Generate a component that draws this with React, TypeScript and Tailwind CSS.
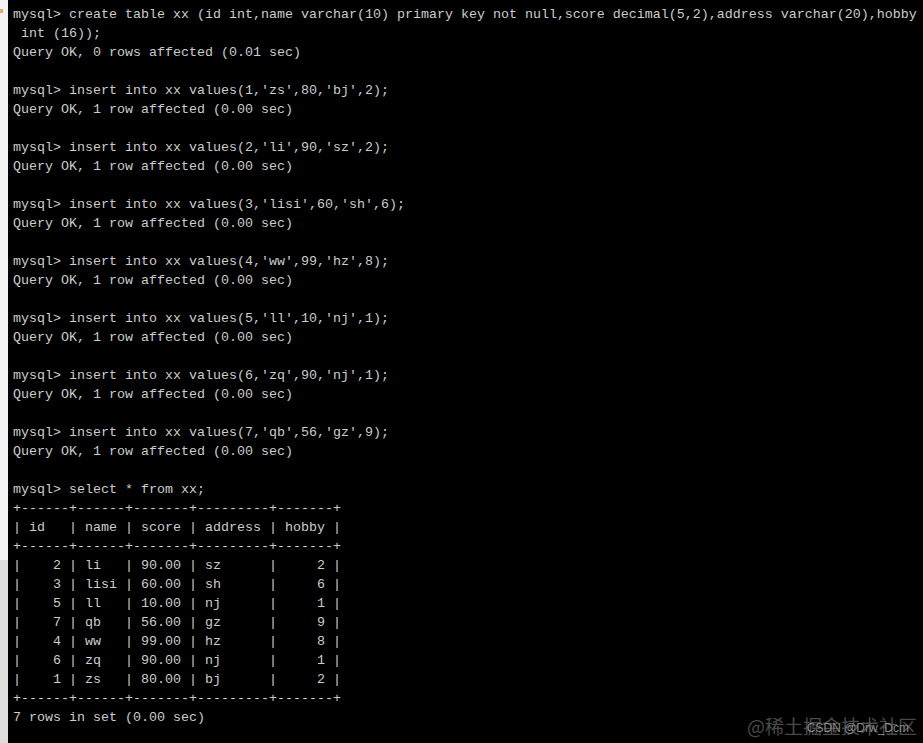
const lines: string[] = [
  "mysql> create table xx (id int,name varchar(10) primary key not null,score decimal(5,2),address varchar(20),hobby",
  " int (16));",
  "Query OK, 0 rows affected (0.01 sec)",
  "",
  "mysql> insert into xx values(1,'zs',80,'bj',2);",
  "Query OK, 1 row affected (0.00 sec)",
  "",
  "mysql> insert into xx values(2,'li',90,'sz',2);",
  "Query OK, 1 row affected (0.00 sec)",
  "",
  "mysql> insert into xx values(3,'lisi',60,'sh',6);",
  "Query OK, 1 row affected (0.00 sec)",
  "",
  "mysql> insert into xx values(4,'ww',99,'hz',8);",
  "Query OK, 1 row affected (0.00 sec)",
  "",
  "mysql> insert into xx values(5,'ll',10,'nj',1);",
  "Query OK, 1 row affected (0.00 sec)",
  "",
  "mysql> insert into xx values(6,'zq',90,'nj',1);",
  "Query OK, 1 row affected (0.00 sec)",
  "",
  "mysql> insert into xx values(7,'qb',56,'gz',9);",
  "Query OK, 1 row affected (0.00 sec)",
  "",
  "mysql> select * from xx;",
  "+------+------+-------+---------+-------+",
  "| id   | name | score | address | hobby |",
  "+------+------+-------+---------+-------+",
  "|    2 | li   | 90.00 | sz      |     2 |",
  "|    3 | lisi | 60.00 | sh      |     6 |",
  "|    5 | ll   | 10.00 | nj      |     1 |",
  "|    7 | qb   | 56.00 | gz      |     9 |",
  "|    4 | ww   | 99.00 | hz      |     8 |",
  "|    6 | zq   | 90.00 | nj      |     1 |",
  "|    1 | zs   | 80.00 | bj      |     2 |",
  "+------+------+-------+---------+-------+",
  "7 rows in set (0.00 sec)",
];

export default function App() {
  return (
    <div className="flex w-[923px] h-[743px] overflow-hidden bg-black">
      {/* window edge on the left */}
      <div className="flex flex-col w-[8px] shrink-0">
        <div className="h-[560px] bg-[#f3f3f3] relative">
          <div className="absolute left-0 top-[9px] w-[3px] h-[4px] bg-[#e8a86a]" />
        </div>
        <div className="flex-1 bg-[#dedede]" />
      </div>

      <div className="relative flex-1 pl-[5px] pt-[5px]">
        <pre className="font-['Liberation_Mono',monospace] text-[13.33px] leading-[19px] text-[#cccccc] whitespace-pre">
          {lines.map((l, i) => (
            <div key={i} className="h-[19px]">
              {l}
            </div>
          ))}
        </pre>

        {/* watermarks, overlapping as in the screenshot */}
        <div className="absolute right-[6px] bottom-[8px] text-[19px] leading-none text-[#4a4a4a] font-['Noto_Sans_CJK_SC',sans-serif]">
          @稀土掘金技术社区
        </div>
        <div className="absolute right-[14px] bottom-[9px] text-[12px] leading-none text-[#8a8a8a] font-['Liberation_Sans',sans-serif]">
          CSDN @Drw_Dcm
        </div>
      </div>
    </div>
  );
}
